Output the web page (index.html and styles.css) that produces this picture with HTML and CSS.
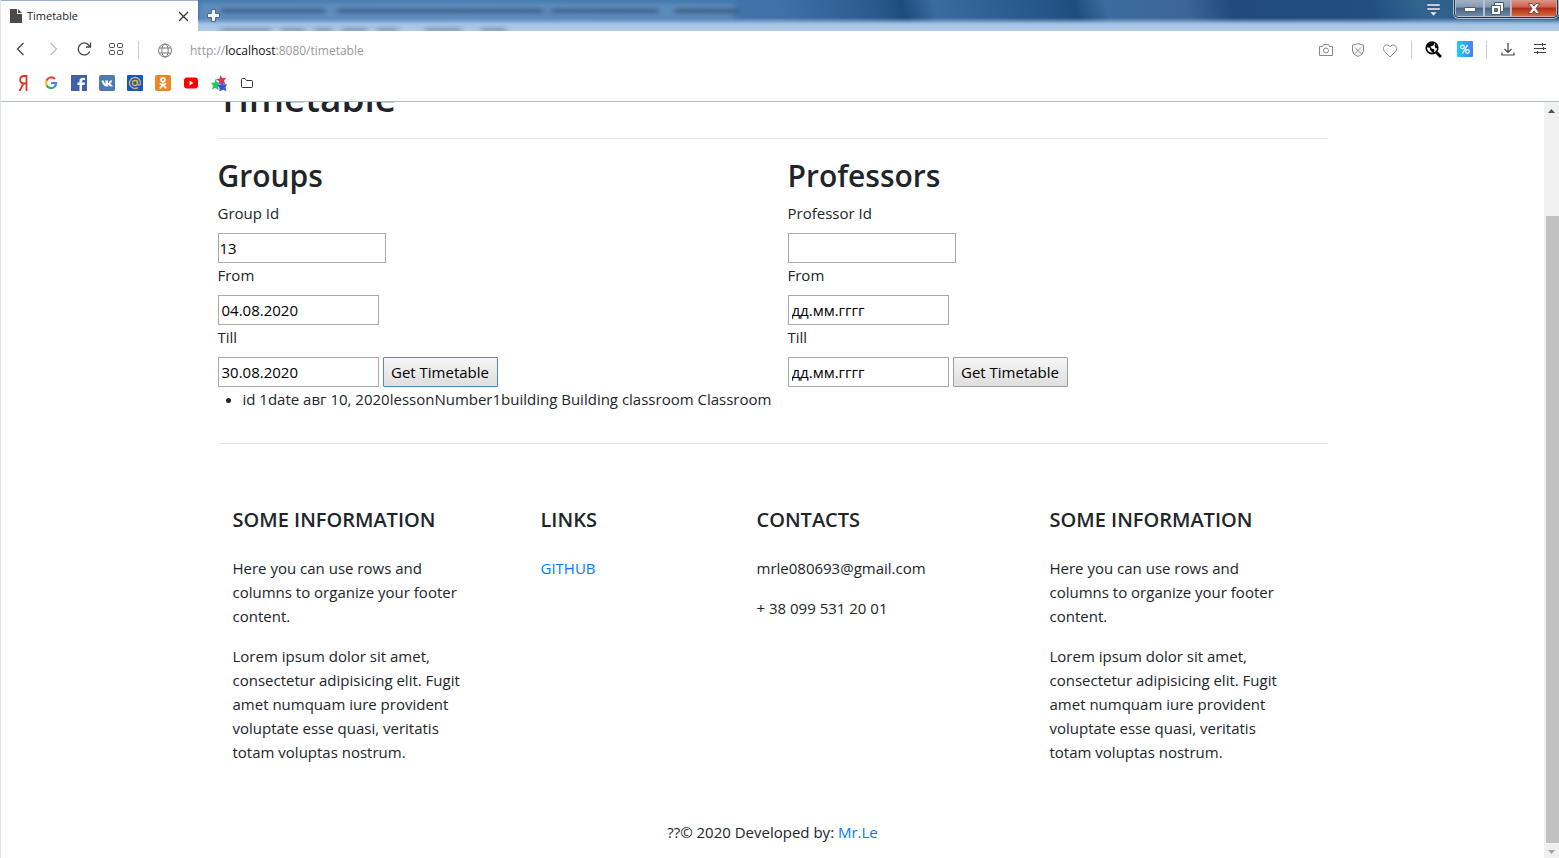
FILE: index.html
```html
<!DOCTYPE html>
<html lang="en">
<head>
<meta charset="utf-8">
<title>Timetable</title>
<link rel="stylesheet" href="styles.css">
</head>
<body>
<header class="chrome">
  <div class="titlebar">
    <svg class="glass" width="560" height="31" aria-hidden="true">
      <defs><filter id="soft" x="-5%" y="-100%" width="110%" height="300%"><feGaussianBlur stdDeviation="3 2"/></filter></defs>
      <g filter="url(#soft)">
        <path d="M0 3h535v17H0z" fill="#7fa9d3" opacity=".4"/>
        <path d="M22 11h105M137 11h208M352 11h108M475 11h64" stroke="#1d3657" stroke-width="6" opacity=".45"/>
        <path d="M22 30h50M82 30h24M115 30h18M143 30h25M178 30h21M226 30h36M282 30h25" stroke="#405a7c" stroke-width="4" opacity=".5"/>
      </g>
    </svg>
    <div class="tab">
      <svg width="12" height="14" viewBox="0 0 12 14"><path d="M0 0h7v5h5v9H0z" fill="#4a4a4a"/><path d="M8 0l4 4H8z" fill="#4a4a4a"/></svg>
      <span class="tab-name">Timetable</span>
      <button class="icon" aria-label="Close tab"><svg width="11" height="11" viewBox="0 0 11 11"><path d="M1 1l9 9M10 1l-9 9" stroke="#333" stroke-width="1.3"/></svg></button>
    </div>
    <button class="icon new-tab" aria-label="New tab"><svg width="13" height="13" viewBox="0 0 13 13"><path d="M4.500.5h4v4h4v4h-4v4h-4v-4h-4v-4h4z" fill="#f4f7fb" stroke="#496789"/></svg></button>
    <button class="icon tab-menu" aria-label="Tab menu"><svg width="15" height="13" viewBox="0 0 15 13"><path d="M1 1h13v2H1zM1 5h13v2H1zM4 9h7l-3.500 4z" fill="#e6eef7" stroke="#294a70" stroke-width=".4"/></svg></button>
    <div class="window-buttons">
      <button class="win min" aria-label="Minimize"><svg width="12" height="5"><path d="M.5.5h11v4H.5z" fill="#fff" stroke="#4d5f73"/></svg></button>
      <button class="win restore" aria-label="Restore"><svg width="13" height="13" viewBox="0 0 13 13"><path d="M3.500.5h9v9h-9z" fill="#fff" stroke="#4d5f73"/><path d="M.5 3.500h9v9h-9z" fill="#fff" stroke="#4d5f73"/><path d="M3.500 6.500h3v3h-3z" fill="#6b7d92" stroke="#4d5f73"/></svg></button>
      <button class="win close" aria-label="Close"><svg width="12" height="11" viewBox="0 0 12 11"><path d="M.5.5h3.500l2 2.700 2-2.700h3.500L8 5.500l3.500 5H8L6 7.800l-2 2.700H.5l3.500-5z" fill="#fff" stroke="#6b3a3a" stroke-width=".8"/></svg></button>
    </div>
  </div>

  <div class="toolbar">
    <button class="icon" aria-label="Back"><svg width="18" height="18" viewBox="0 0 18 18" fill="none" stroke="#444" stroke-width="1.300"><path d="M12.500 2l-6 6 6 6"/></svg></button>
    <button class="icon" aria-label="Forward"><svg width="18" height="18" viewBox="0 0 18 18" fill="none" stroke="#bbb" stroke-width="1.200"><path d="M7.500 2l6 6-6 6"/></svg></button>
    <button class="icon" aria-label="Reload"><svg width="18" height="18" viewBox="0 0 18 18" fill="none" stroke="#444" stroke-width="1.300"><path d="M14.700 10.500A6 6 0 1 1 14.500 5M15.500 1.500V6H11"/></svg></button>
    <button class="icon" aria-label="Speed dial"><svg width="18" height="18" viewBox="0 0 18 18" fill="none" stroke="#444"><rect x="2.500" y="2.500" width="5" height="4" rx="1"/><rect x="10.500" y="2.500" width="5" height="4" rx="1"/><rect x="2.500" y="9.500" width="5" height="4" rx="1"/><rect x="10.500" y="9.500" width="5" height="4" rx="1"/></svg></button>
    <span class="divider"></span>
    <button class="icon globe" aria-label="Site information"><svg width="18" height="18" viewBox="0 0 18 18" fill="none" stroke="#777"><circle cx="9" cy="9.500" r="6.500"/><ellipse cx="9" cy="9.500" rx="3.200" ry="6.500"/><path d="M3.500 7h11M3.500 12h11"/></svg></button>
    <div class="address" role="textbox" aria-label="Address" contenteditable="true" spellcheck="false">http://<b>localhost</b>:8080/timetable</div>
    <div class="tools">
      <button class="icon" aria-label="Snapshot"><svg width="18" height="18" viewBox="0 0 18 18" fill="none" stroke="#888"><path d="M2.500 5.500h3l1-2h5l1 2h3v9h-13z" stroke-linejoin="round"/><circle cx="9" cy="9.500" r="2.500"/></svg></button>
      <button class="icon" aria-label="Ad blocker"><svg width="18" height="18" viewBox="0 0 18 18" fill="none" stroke="#888"><path d="M3.500 4q3 0 5.500-1.500Q11.500 4 14.500 4v6q0 3.500-5.500 5.500-5.500-2-5.500-5.500zM6 6.500l6 6M12 6.500l-6 6"/></svg></button>
      <button class="icon" aria-label="Add to bookmarks"><svg width="18" height="18" viewBox="0 0 18 18" fill="none" stroke="#888"><path d="M9 16L3.500 10.500C0 6.500 5.500 1 9 5.800 12.500 1 18 6.500 14.500 10.500z"/></svg></button>
      <span class="divider"></span>
      <button class="icon" aria-label="Web search"><svg width="18" height="18" viewBox="0 0 18 18"><path d="M12 11l5 5" stroke="#000" stroke-width="3"/><circle cx="8" cy="6.800" r="5.800" fill="#fff" stroke="#000" stroke-width="1.600"/><path d="M2.500 4.500l4-3 4 0-1 3-3 1 1 2 3 1-1 4-3-3-1-3-3 0zM11.500 2.500l2 4-2 1-1-3z"/></svg></button>
      <button class="icon" aria-label="Discounts"><svg width="18" height="18" viewBox="0 0 18 18"><defs><linearGradient id="cyan"><stop stop-color="#17d0f5"/><stop offset="1" stop-color="#4c7df2"/></linearGradient></defs><rect x="1" y="0" width="16" height="16" rx="1" fill="url(#cyan)"/><g fill="none" stroke="#fff" stroke-width="1.200"><circle cx="6.500" cy="6" r="1.800"/><circle cx="11.500" cy="10.500" r="1.800"/><path d="M11.500 4l-5 8.500"/></g></svg></button>
      <span class="divider"></span>
      <button class="icon" aria-label="Downloads"><svg width="18" height="18" viewBox="0 0 18 18" fill="none" stroke="#444" stroke-width="1.200"><path d="M9 2v9M5.500 8L9 11.500 12.500 8M3 11.500v2.500h12v-2.500"/></svg></button>
      <button class="icon" aria-label="Easy setup"><svg width="18" height="18" viewBox="0 0 18 18" fill="none" stroke="#444"><path d="M3 3.500h12M3 7.500h12M3 11.500h12M11.500 2v3M12.500 6v3M6.500 10v3"/></svg></button>
    </div>
  </div>

  <nav class="bookmarks" aria-label="Bookmarks">
    <a href="#" aria-label="Yandex"><svg width="16" height="16" viewBox="0 0 16 16" fill="none" stroke="#e63221" stroke-width="1.800"><path d="M11.500 16V1H9C4 1 4 8.500 8.500 8.500h3M8.500 8.500L4.500 16"/></svg></a>
    <a href="#" aria-label="Google"><svg width="16" height="16" viewBox="0 0 16 16" fill="none" stroke-width="2.200"><path d="M12 4A5 5 0 0 0 3.600 5.700" stroke="#ea4335"/><path d="M3.600 5.700a5 5 0 0 0 0 4.600" stroke="#fbbc05"/><path d="M3.600 10.300A5 5 0 0 0 11.300 12" stroke="#34a853"/><path d="M11.300 12A5 5 0 0 0 13 8H8" stroke="#4285f4"/></svg></a>
    <a href="#" aria-label="Facebook"><svg width="16" height="16" viewBox="0 0 16 16"><path d="M0 0h16v16H0z" fill="#4060a8"/><path d="M8.500 16v-6H6.500V7.500h2V5.800C8.500 3.500 10 2.500 14 2.900v2.200c-2.500-.2-3 0-3 2.400h2.900l-.4 2.500H11v6z" fill="#fff"/></svg></a>
    <a href="#" aria-label="VK"><svg width="16" height="16" viewBox="0 0 16 16"><rect width="16" height="16" rx="2" fill="#4c7bb0"/><path d="M2.500 5.500h2q1 3 2 3.500V7L6 5.500h3v3c1-.5 2-3 2-3h2.300c-.3 1.500-1.800 2.500-1.800 3s1.800 1.500 2.300 3h-2.500L9 9.700v1.800H7.500C5 11.500 3 8 2.500 5.500z" fill="#fff"/></svg></a>
    <a href="#" aria-label="Mail.ru"><svg width="16" height="16" viewBox="0 0 16 16"><rect width="16" height="16" rx="1" fill="#1058c5"/><g fill="none" stroke="#eab04c" stroke-width="1.300"><circle cx="8" cy="8" r="2.500"/><path d="M10.500 5.500v3c0 2.500 3 2 3-.5a5.500 5.500 0 1 0-2.500 4.600"/></g></svg></a>
    <a href="#" aria-label="Odnoklassniki"><svg width="16" height="16" viewBox="0 0 16 16"><rect width="16" height="16" rx="2" fill="#ee8523"/><g fill="none" stroke="#fff" stroke-width="1.800"><circle cx="8" cy="4.800" r="2"/><path d="M4.800 8.500q3.200 2 6.400 0M8 9.500L5 13.500M8 9.500l3 4"/></g></svg></a>
    <a href="#" aria-label="YouTube"><svg width="16" height="16" viewBox="0 0 16 16"><rect x="1" y="2.500" width="14" height="11" rx="3" fill="#f00"/><path d="M6.500 5.500v5l4-2.500z" fill="#fff"/></svg></a>
    <a href="#" aria-label="Stars"><svg width="16" height="16" viewBox="0 0 16 16"><path d="M9.500 0l1.700 3 4-.3-2.200 3.300 1.500 3-3.800-.6L8 9.500V6L4.500 4.500l4-1z" fill="#de3555"/><path d="M4.500 4l1.500 3L9.500 8 7 10.500l.7 4.500-3.500-2-3.200 1.500L2 10.500 0 8l3.500-.5z" fill="#26c66b"/><path d="M11 6.500l1.500 3 3.500-.5-1.500 3.500L15.500 16l-3.500-1.300L8.500 16.500V13L6.500 10l3.500-.6z" fill="#4150d4"/></svg></a>
    <a href="#" aria-label="Folder"><svg width="16" height="16" viewBox="0 0 16 16"><path d="M2.500 4.500q0-1 1-1H6L7.500 5.500h5q1 0 1 1v5q0 1-1 1h-9q-1 0-1-1z" fill="none" stroke="#333"/></svg></a>
  </nav>
</header>

<div class="viewport">
  <main class="page">
    <div class="container">
      <h1>Timetable</h1>
      <hr>
      <div class="forms">
        <form>
          <h2>Groups</h2>
          <label for="group">Group Id</label>
          <input id="group" class="number" type="text" value="13">
          <label for="group-from">From</label>
          <input id="group-from" class="date" type="text" value="04.08.2020">
          <label for="group-till">Till</label>
          <div class="submit-row">
            <input id="group-till" class="date" type="text" value="30.08.2020">
            <button class="submit focused" type="button">Get Timetable</button>
          </div>
        </form>
        <form>
          <h2>Professors</h2>
          <label for="prof">Professor Id</label>
          <input id="prof" class="number" type="text">
          <label for="prof-from">From</label>
          <input id="prof-from" class="date" type="text" placeholder="дд.мм.гггг">
          <label for="prof-till">Till</label>
          <div class="submit-row">
            <input id="prof-till" class="date" type="text" placeholder="дд.мм.гггг">
            <button class="submit" type="button">Get Timetable</button>
          </div>
        </form>
      </div>
      <ul class="lessons">
        <li>id 1date авг 10, 2020lessonNumber1building Building classroom Classroom</li>
      </ul>
      <hr>
      <footer>
        <div class="footer-columns">
          <section>
            <h5>SOME INFORMATION</h5>
            <p>Here you can use rows and columns to organize your footer content.</p>
            <p>Lorem ipsum dolor sit amet, consectetur adipisicing elit. Fugit amet numquam iure provident voluptate esse quasi, veritatis totam voluptas nostrum.</p>
          </section>
          <section>
            <h5>LINKS</h5>
            <p><a href="#">GITHUB</a></p>
          </section>
          <section>
            <h5>CONTACTS</h5>
            <p>mrle080693@gmail.com</p>
            <p>+ 38 099 531 20 01</p>
          </section>
          <section>
            <h5>SOME INFORMATION</h5>
            <p>Here you can use rows and columns to organize your footer content.</p>
            <p>Lorem ipsum dolor sit amet, consectetur adipisicing elit. Fugit amet numquam iure provident voluptate esse quasi, veritatis totam voluptas nostrum.</p>
          </section>
        </div>
        <div class="copyright">??© 2020 Developed by: <a href="#">Mr.Le</a></div>
      </footer>
    </div>
  </main>
  <div class="scrollbar" aria-hidden="true">
    <svg width="7" height="4"><path d="M0 4h7L3.500 0z" fill="#505050"/></svg>
    <div class="track"><div class="thumb"></div></div>
    <svg width="7" height="4"><path d="M0 0h7L3.500 4z" fill="#a3a3a3"/></svg>
  </div>
</div>
</body>
</html>
```

FILE: styles.css
```css
* { box-sizing: border-box; }

body {
  margin: 0;
  height: 100vh;
  display: flex;
  flex-direction: column;
  overflow: hidden;
  background: #fff;
  color: #212529;
  font: 15px/24px "Open Sans", "Noto Sans", sans-serif;
}

a { color: #007bff; text-decoration: none; }
svg { display: block; }

.icon {
  display: flex;
  padding: 0;
  border: 0;
  background: none;
}

/* Browser frame */
.chrome {
  flex: none;
  border-left: 1px solid #dfe5f0;
  border-bottom: 1px solid #adbfcf;
}

.titlebar {
  position: relative;
  display: flex;
  align-items: flex-start;
  height: 31px;
  background:
    linear-gradient(to bottom, transparent 18px, #a5c3e3 24px, #b0cae7 31px),
    linear-gradient(75deg, #4575aa 0, #4a7db3 30%, #4072a8 50%, #2b5b8e 56%, #1e4c7d 58%, #3a6c9f 60%, #25568a 67%, #1f4d7c 69%, #3d6b9f 71%, #3c6696 76%, #204b7c 79%, #234f80 88%, #31648f 91%, #245080 100%);
}

.glass { position: absolute; left: 198px; top: 0; }

.tab {
  position: relative;
  display: flex;
  align-items: center;
  width: 197px;
  height: 31px;
  padding: 0 9px;
  border-top: 1px solid #9ab0c8;
  background: #fff;
}

.tab-name { flex: 1; margin-left: 5px; font-size: 11px; color: #222; }
.new-tab { position: relative; margin: 9px 0 0 9px; }
.tab-menu { margin: 3px 13px 0 auto; }

.window-buttons {
  display: flex;
  height: 18px;
  width: 104px;
  border: 1px solid #26364a;
  border-top: 0;
  border-radius: 0 0 5px 5px;
  overflow: hidden;
  box-shadow: 0 0 0 1px #a9bdd2;
  margin-right: 1px;
}

.win {
  display: flex;
  align-items: center;
  justify-content: center;
  padding: 0;
  border: 1px solid #b5c2d1;
  border-top: 0;
  background: linear-gradient(#a3b3c6 0, #8397af 45%, #4a627f 50%, #6c8aa8 100%);
}

.min { width: 29px; padding-top: 3px; }
.restore { width: 27px; }
.close {
  flex: 1;
  border-color: #dba096;
  background: linear-gradient(#dc9688 0, #cc5b48 45%, #b02b15 50%, #d26a3f 100%);
}

.toolbar {
  display: flex;
  align-items: center;
  gap: 14px;
  height: 37px;
  padding: 0 10px;
}

.divider { width: 1px; height: 18px; margin: 0 -1px; background: #ccc; }
.globe { margin-left: 4px; }
.address { flex: 1; margin-left: 2px; padding-top: 2px; font-size: 12px; color: #999; white-space: nowrap; }
.address b { font-weight: 400; color: #111; }
.tools { display: flex; align-items: center; gap: 14px; }
.tools .divider { margin: 0 -2px; }

.bookmarks {
  display: flex;
  align-items: center;
  gap: 12px;
  height: 33px;
  padding: 0 14px 4px;
}

/* Scrolled document */
.viewport { flex: 1; min-height: 0; display: flex; }

.page {
  flex: 1;
  min-width: 0;
  overflow: hidden;
  border-left: 1px solid #dfe5f0;
}

.container {
  max-width: 1140px;
  margin: -28px auto 0;
  padding: 0 15px;
}

h1, h2, h5 { margin: 0 0 8px; font-weight: 600; }
h1 { font-size: 37px; line-height: 48px; }
h2 { margin-bottom: 4px; font-size: 30px; line-height: 42px; }
h5 { font-size: 20px; line-height: 24px; }

hr {
  margin: 16px 0;
  border: 0;
  border-top: 1px solid #e5e5e5;
}

.forms {
  display: grid;
  grid-template-columns: 1fr 1fr;
  gap: 30px;
}

.forms label { display: block; margin-bottom: 8px; }

.forms input, .submit {
  display: block;
  height: 30px;
  font: inherit;
  color: #000;
}

.forms input {
  padding: 1px;
  border: 1px solid #a9a9a9;
  border-radius: 0;
  background: #fff;
}

.forms input::placeholder { color: #000; opacity: 1; }
.forms .number { width: 168px; }
.forms .date { width: 161px; padding: 1px 3px; }
.submit-row { display: flex; gap: 4px; }

.submit {
  width: 115px;
  padding: 0;
  border: 1px solid #a0a0a0;
  border-radius: 1px;
  background: linear-gradient(#f6f6f6, #dedede);
  white-space: nowrap;
}

.submit.focused { border-color: #5287cd; }

.lessons { margin: 0 0 32px; padding-left: 25px; }

.footer-columns {
  display: grid;
  grid-template-columns: 308fr 216fr 293fr 278fr;
  padding: 48px 0 0 15px;
}

.footer-columns h5 { margin-bottom: 24px; }
.footer-columns p { max-width: 240px; margin: 0 0 16px; }
.copyright { padding: 40px 0 16px; text-align: center; }

.scrollbar {
  display: flex;
  flex-direction: column;
  align-items: center;
  width: 15px;
  padding: 7px 0 4px;
  background: #f0f0f0;
}

.track {
  flex: 1;
  display: flex;
  flex-direction: column;
  justify-content: flex-end;
  align-self: stretch;
  padding: 4px 0 7px 2px;
}

.thumb { height: 86.4%; background: #c1c1c1; }
```
